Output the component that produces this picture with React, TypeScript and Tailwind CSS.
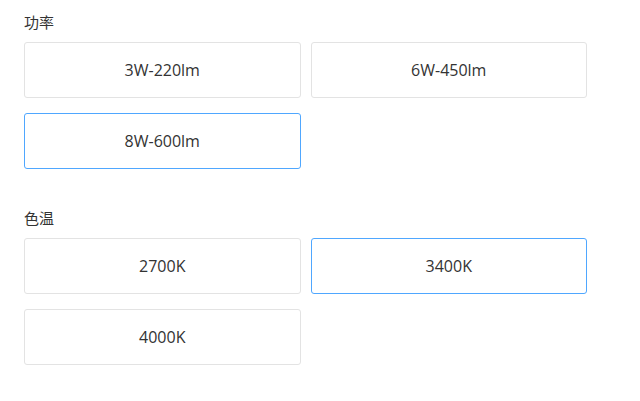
import React from 'react';

interface SpecGroupProps {
  title: string;
  options: string[];
  selected: string;
  className?: string;
}

function SpecGroup({ title, options, selected, className = '' }: SpecGroupProps) {
  return (
    <div className={className}>
      <div className="h-5 leading-5 text-[15px] text-[#333] mb-[10px]">{title}</div>
      <div className="grid grid-cols-2 gap-x-[10px] gap-y-[15px]">
        {options.map((opt) => (
          <div
            key={opt}
            className={
              opt === selected
                ? 'h-[56px] flex items-center justify-center rounded-[3px] border border-[#4fa7ff] text-[16px] text-[#333]'
                : 'h-[56px] flex items-center justify-center rounded-[3px] border border-[#e3e3e3] text-[16px] text-[#333]'
            }
          >
            {opt}
          </div>
        ))}
      </div>
    </div>
  );
}

export default function App() {
  return (
    <div
      className="w-[640px] h-[401px] bg-white pt-3 pl-6"
      style={{ fontFamily: '"Open Sans", "Noto Sans CJK SC", sans-serif' }}
    >
      <div className="w-[563px]">
        <SpecGroup title="功率" options={['3W-220lm', '6W-450lm', '8W-600lm']} selected="8W-600lm" />
        <SpecGroup
          title="色温"
          options={['2700K', '3400K', '4000K']}
          selected="3400K"
          className="mt-[39px]"
        />
      </div>
    </div>
  );
}
